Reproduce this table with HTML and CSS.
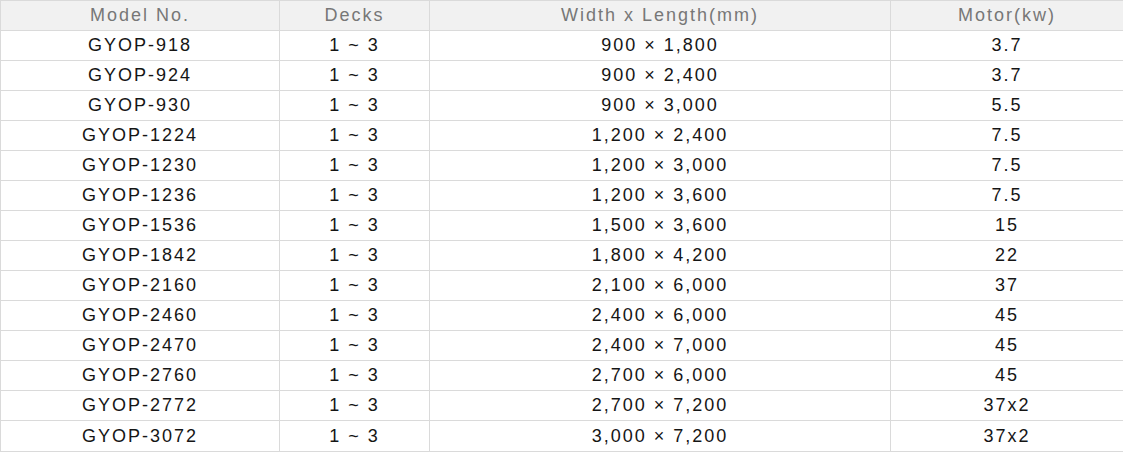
FILE: index.html
```html
<!DOCTYPE html>
<html>
<head>
<meta charset="utf-8">
<link rel="stylesheet" href="styles.css">
</head>
<body>
<table class="spec">
  <colgroup>
    <col class="c-model"><col class="c-decks"><col class="c-size"><col class="c-motor">
  </colgroup>
  <thead>
    <tr><th>Model No.</th><th>Decks</th><th>Width x Length(mm)</th><th>Motor(kw)</th></tr>
  </thead>
  <tbody>
    <tr><td>GYOP-918</td><td>1 ~ 3</td><td>900 × 1,800</td><td>3.7</td></tr>
    <tr><td>GYOP-924</td><td>1 ~ 3</td><td>900 × 2,400</td><td>3.7</td></tr>
    <tr><td>GYOP-930</td><td>1 ~ 3</td><td>900 × 3,000</td><td>5.5</td></tr>
    <tr><td>GYOP-1224</td><td>1 ~ 3</td><td>1,200 × 2,400</td><td>7.5</td></tr>
    <tr><td>GYOP-1230</td><td>1 ~ 3</td><td>1,200 × 3,000</td><td>7.5</td></tr>
    <tr><td>GYOP-1236</td><td>1 ~ 3</td><td>1,200 × 3,600</td><td>7.5</td></tr>
    <tr><td>GYOP-1536</td><td>1 ~ 3</td><td>1,500 × 3,600</td><td>15</td></tr>
    <tr><td>GYOP-1842</td><td>1 ~ 3</td><td>1,800 × 4,200</td><td>22</td></tr>
    <tr><td>GYOP-2160</td><td>1 ~ 3</td><td>2,100 × 6,000</td><td>37</td></tr>
    <tr><td>GYOP-2460</td><td>1 ~ 3</td><td>2,400 × 6,000</td><td>45</td></tr>
    <tr><td>GYOP-2470</td><td>1 ~ 3</td><td>2,400 × 7,000</td><td>45</td></tr>
    <tr><td>GYOP-2760</td><td>1 ~ 3</td><td>2,700 × 6,000</td><td>45</td></tr>
    <tr><td>GYOP-2772</td><td>1 ~ 3</td><td>2,700 × 7,200</td><td>37x2</td></tr>
    <tr><td>GYOP-3072</td><td>1 ~ 3</td><td>3,000 × 7,200</td><td>37x2</td></tr>
  </tbody>
</table>
</body>
</html>
```
FILE: styles.css
```css
html, body {
  margin: 0;
  padding: 0;
  background: #fff;
}
.spec {
  width: 1123px;
  border-collapse: collapse;
  table-layout: fixed;
  border: 1px solid #8c8c8c;
  font-family: "Liberation Sans", Arial, sans-serif;
  font-size: 18px;
  letter-spacing: 2px;
  color: #151515;
}
.c-model { width: 279px; }
.c-decks { width: 150px; }
.c-size { width: 461px; }
.c-motor { width: 233px; }
.spec th,
.spec td {
  height: 29px;
  border: 1px solid #dadada;
  padding: 0;
  text-align: center;
  vertical-align: middle;
  white-space: nowrap;
  line-height: 29px;
}
.spec tbody tr:last-child td {
  height: 30px;
}
.spec th {
  background: #f1f1f1;
  color: #777;
  font-weight: normal;
}
```
